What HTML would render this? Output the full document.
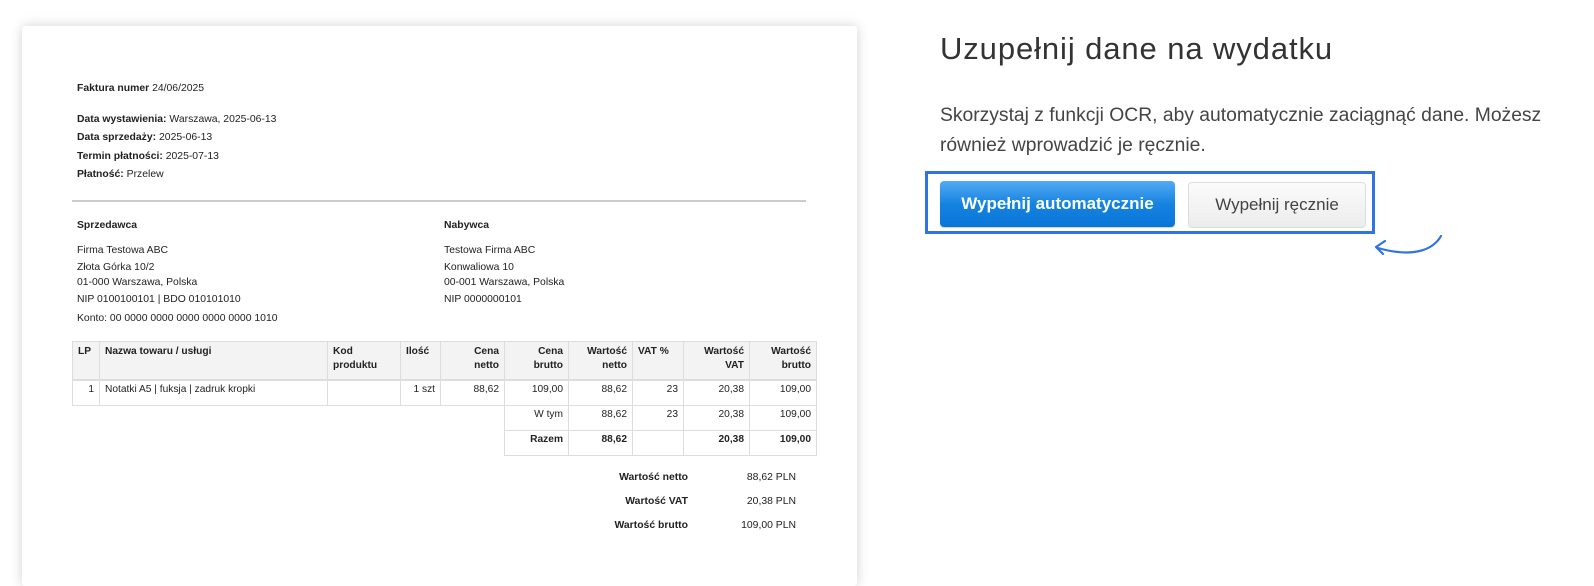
<!DOCTYPE html>
<html><head><meta charset="utf-8"><style>
body{margin:0;width:1594px;height:557px;background:#fff;position:relative;overflow:hidden;font-family:"Liberation Sans",Arial,sans-serif;}
.card{position:absolute;left:22px;top:26px;width:835px;height:560px;background:#fff;box-shadow:0 0 12px rgba(0,0,0,.18);border-radius:3px;}
.t{position:absolute;font-size:10.4px;color:#222;white-space:nowrap;line-height:12px;}
b{font-weight:bold;}
table{position:absolute;left:50px;top:315px;border-collapse:collapse;font-size:10.2px;color:#222;}
td{border:1px solid #ddd;padding:3px 5px;text-align:right;vertical-align:top;height:18px;line-height:12px;}
th{border:1px solid #ddd;padding:3px 5px;text-align:right;vertical-align:top;background:#f3f3f3;font-weight:bold;height:31px;line-height:14px;border-bottom:2px solid #ddd;}
.e{border:none;}
h1{position:absolute;left:940px;top:31px;margin:0;font-weight:normal;font-size:31px;letter-spacing:0.9px;color:#333;}
.p{position:absolute;left:940px;top:101px;font-size:19.3px;line-height:30px;color:#444;width:680px;white-space:nowrap;}
.box{position:absolute;left:925px;top:171px;width:444px;height:57px;border:3px solid #2f74e0;}
.b1{position:absolute;left:940px;top:181px;width:235px;height:46px;border-radius:4px;background:linear-gradient(#55aaf5,#1583e0 50%,#0a75d8);color:#fff;font-weight:bold;font-size:17px;text-align:center;line-height:46px;box-shadow:0 1px 1px rgba(0,0,0,.2);}
.b2{position:absolute;left:1188px;top:182px;width:176px;height:44px;border-radius:4px;background:linear-gradient(#fbfbfb,#ececec);border:1px solid #ddd;color:#444;font-size:17px;text-align:center;line-height:44px;}
</style></head><body>
<div class="card"></div>
<div class="t" style="left:77px;top:83px"><b>Faktura numer</b> 24/06/2025</div>
<div class="t" style="left:77px;top:114px"><b>Data wystawienia:</b> Warszawa, 2025-06-13</div>
<div class="t" style="left:77px;top:132px"><b>Data sprzedaży:</b> 2025-06-13</div>
<div class="t" style="left:77px;top:151px"><b>Termin płatności:</b> 2025-07-13</div>
<div class="t" style="left:77px;top:169px"><b>Płatność:</b> Przelew</div>
<div style="position:absolute;left:72px;top:200px;width:734px;height:2px;background:#ccc"></div>
<div class="t" style="left:77px;top:220px"><b>Sprzedawca</b></div>
<div class="t" style="left:77px;top:245px">Firma Testowa ABC</div>
<div class="t" style="left:77px;top:262px">Złota Górka 10/2</div>
<div class="t" style="left:77px;top:277px">01-000 Warszawa, Polska</div>
<div class="t" style="left:77px;top:294px">NIP 0100100101 | BDO 010101010</div>
<div class="t" style="left:77px;top:313px">Konto: 00 0000 0000 0000 0000 0000 1010</div>
<div class="t" style="left:444px;top:220px"><b>Nabywca</b></div>
<div class="t" style="left:444px;top:245px">Testowa Firma ABC</div>
<div class="t" style="left:444px;top:262px">Konwaliowa 10</div>
<div class="t" style="left:444px;top:277px">00-001 Warszawa, Polska</div>
<div class="t" style="left:444px;top:294px">NIP 0000000101</div>
<table style="left:72px;top:341px">
<tr><th style="width:16px;text-align:left">LP</th><th style="width:217px;text-align:left">Nazwa towaru / usługi</th><th style="width:62px;text-align:left">Kod<br>produktu</th><th style="width:29px;text-align:left">Ilość</th><th style="width:53px">Cena<br>netto</th><th style="width:53px">Cena<br>brutto</th><th style="width:53px">Wartość<br>netto</th><th style="width:40px;text-align:left">VAT %</th><th style="width:55px">Wartość<br>VAT</th><th style="width:56px">Wartość<br>brutto</th></tr>
<tr><td>1</td><td style="text-align:left">Notatki A5 | fuksja | zadruk kropki</td><td></td><td>1 szt</td><td>88,62</td><td>109,00</td><td>88,62</td><td>23</td><td>20,38</td><td>109,00</td></tr>
<tr><td class="e"></td><td class="e"></td><td class="e"></td><td class="e"></td><td class="e"></td><td>W tym</td><td>88,62</td><td>23</td><td>20,38</td><td>109,00</td></tr>
<tr><td class="e"></td><td class="e"></td><td class="e"></td><td class="e"></td><td class="e"></td><td><b>Razem</b></td><td><b>88,62</b></td><td></td><td><b>20,38</b></td><td><b>109,00</b></td></tr>
</table>
<div class="t" style="left:560px;width:128px;text-align:right;top:472px"><b>Wartość netto</b></div>
<div class="t" style="left:700px;width:96px;text-align:right;top:472px">88,62 PLN</div>
<div class="t" style="left:560px;width:128px;text-align:right;top:496px"><b>Wartość VAT</b></div>
<div class="t" style="left:700px;width:96px;text-align:right;top:496px">20,38 PLN</div>
<div class="t" style="left:560px;width:128px;text-align:right;top:520px"><b>Wartość brutto</b></div>
<div class="t" style="left:700px;width:96px;text-align:right;top:520px">109,00 PLN</div>
<h1>Uzupełnij dane na wydatku</h1>
<div class="p">Skorzystaj z funkcji OCR, aby automatycznie zaciągnąć dane. Możesz<br>również wprowadzić je ręcznie.</div>
<div class="box"></div>
<div class="b1">Wypełnij automatycznie</div>
<div class="b2">Wypełnij ręcznie</div>
<svg style="position:absolute;left:1368px;top:232px" width="80" height="30" viewBox="0 0 80 30"><path d="M73 4 C65 18 45 26 10 16" fill="none" stroke="#2f74e0" stroke-width="2.2" stroke-linecap="round"/><path d="M17 9 L8 15 L15 22" fill="none" stroke="#2f74e0" stroke-width="2.2" stroke-linecap="round" stroke-linejoin="round"/></svg>
</body></html>
